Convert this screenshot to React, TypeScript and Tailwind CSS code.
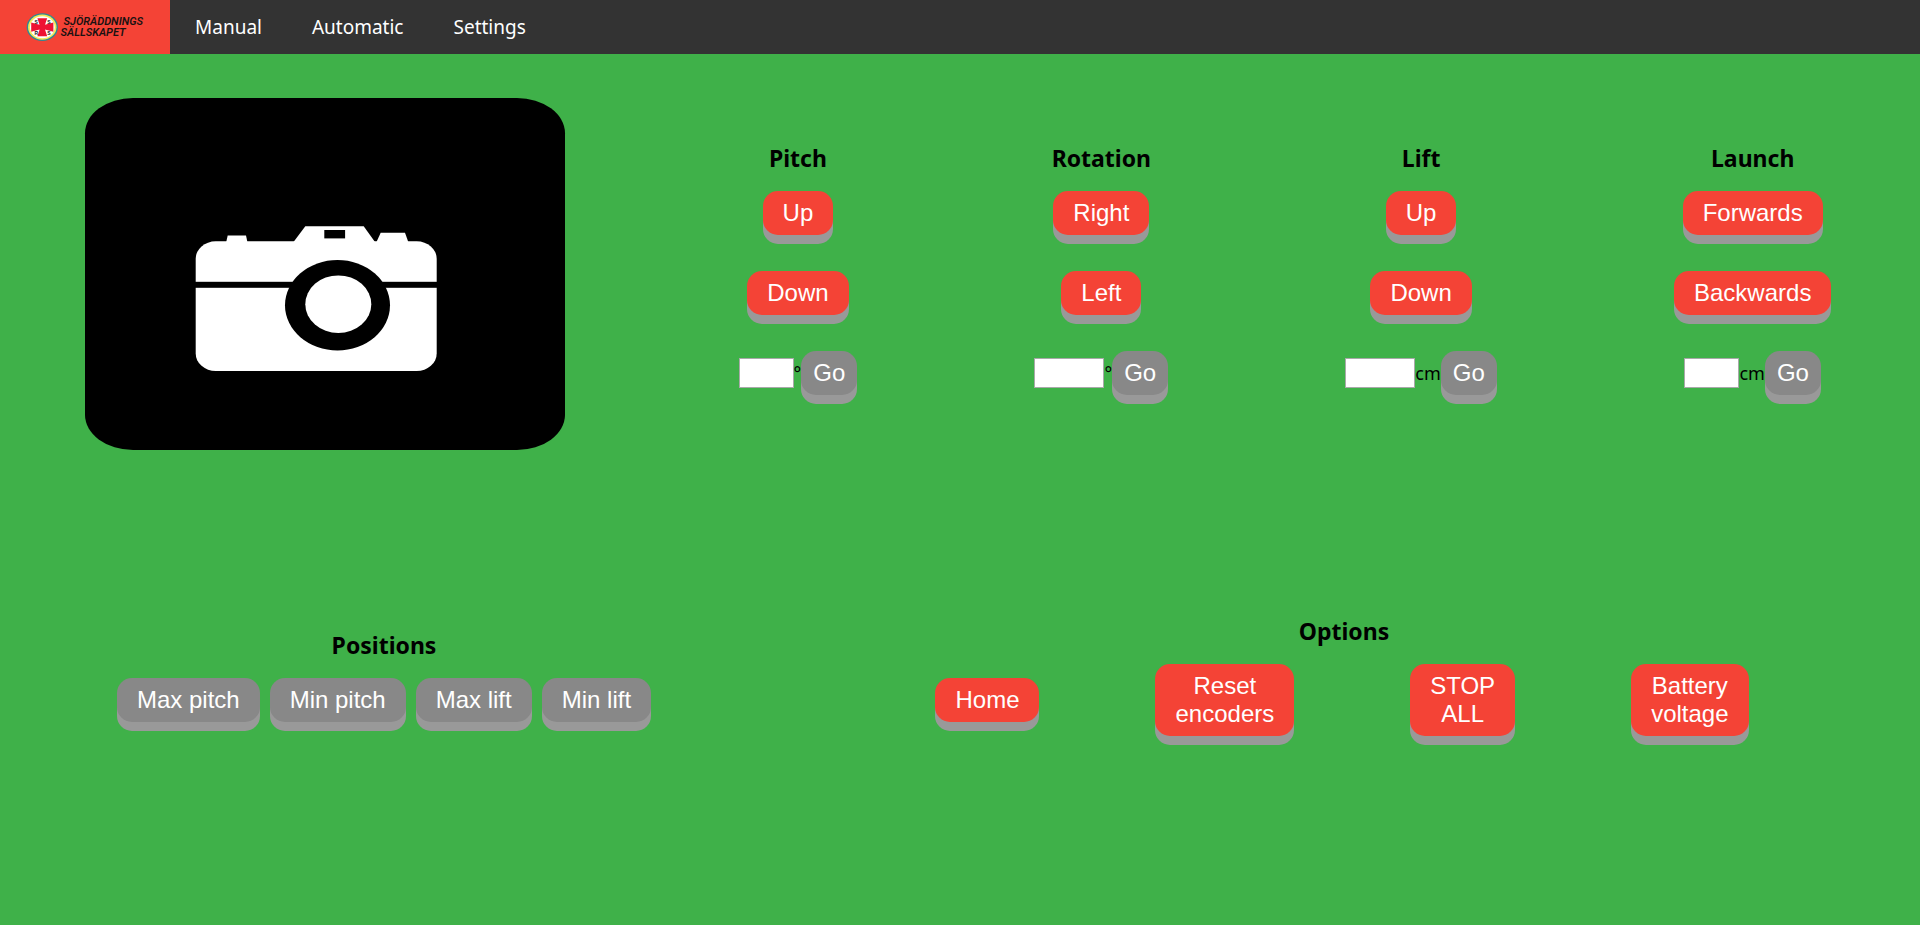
import type { ReactNode } from "react";

type ButtonProps = {
  children: ReactNode;
  tone?: "red" | "grey";
  compact?: boolean;
};

function PushButton({ children, tone = "red", compact = false }: ButtonProps) {
  const color = tone === "red" ? "bg-[#f44336]" : "bg-[#888888]";
  const padding = compact ? "px-3" : "px-5";
  return (
    <button
      type="button"
      className={`${color} ${padding} shrink-0 cursor-pointer rounded-[15px] py-2 text-center font-['Liberation_Sans',Arial,sans-serif] text-2xl leading-7 text-white shadow-[0_9px_#999999]`}
    >
      {children}
    </button>
  );
}

function Heading({ children }: { children: ReactNode }) {
  return <h2 className="text-[23px] leading-8 font-bold">{children}</h2>;
}

type Axis = {
  name: string;
  actions: string[];
  unit: string;
  field: string;
};

const axes: Axis[] = [
  { name: "Pitch", actions: ["Up", "Down"], unit: "°", field: "w-[55px]" },
  { name: "Rotation", actions: ["Right", "Left"], unit: "°", field: "w-[70px]" },
  { name: "Lift", actions: ["Up", "Down"], unit: "cm", field: "w-[70px]" },
  { name: "Launch", actions: ["Forwards", "Backwards"], unit: "cm", field: "w-[55px]" },
];

function AxisControl({ axis }: { axis: Axis }) {
  const id = `${axis.name.toLowerCase()}-value`;
  return (
    <section className="flex flex-col items-center gap-[17px]">
      <Heading>{axis.name}</Heading>
      <div className="flex flex-col items-center gap-9">
        {axis.actions.map((action) => (
          <PushButton key={action}>{action}</PushButton>
        ))}
        <form className="flex items-center" onSubmit={(e) => e.preventDefault()}>
          <input
            id={id}
            type="text"
            aria-label={`${axis.name} value`}
            className={`${axis.field} h-[30px] border border-[#a9a9a9] bg-white px-1 text-base`}
          />
          <label htmlFor={id} className="text-lg leading-7">
            {axis.unit}
          </label>
          <PushButton tone="grey" compact>
            Go
          </PushButton>
        </form>
      </div>
    </section>
  );
}

function Logo() {
  return (
    <svg viewBox="0 0 170 54" className="h-[54px] w-[170px]" role="img" aria-label="Sjöräddningssällskapet">
      <ellipse cx="42.3" cy="27.2" rx="15.6" ry="13.9" fill="#2f8a94" />
      <ellipse cx="42.3" cy="27.2" rx="14.2" ry="12.6" fill="#f3ea5a" />
      <ellipse cx="42.3" cy="27.2" rx="12.4" ry="11" fill="#ffffff" />
      <path
        d="M37.4 18.2H47.2L45 24.8L53.4 22.6V31.8L45 29.6L47.2 36.2H37.4L39.6 29.6L31.2 31.8V22.6L39.6 24.8Z"
        fill="#ee1133"
      />
      <g fontFamily="Liberation Sans, sans-serif" fontSize="5" fontWeight="700" fill="#1a1a1a">
        <text x="34.4" y="23.6">S</text>
        <text x="47.2" y="23.6">S</text>
        <text x="34.4" y="34.6">R</text>
        <text x="47.2" y="34.6">S</text>
      </g>
      <g fontFamily="Roboto, sans-serif" fontSize="11" fontWeight="600" fontStyle="italic" fill="#1a1212">
        <text x="63.5" y="25.4">SJÖRÄDDNINGS</text>
        <text x="60.5" y="36.4">SÄLLSKAPET</text>
      </g>
    </svg>
  );
}

function CameraFeed() {
  return (
    <svg viewBox="0 0 480 352" className="h-[352px] w-[480px] rounded-[10%] bg-black" role="img" aria-label="Camera">
      <g fill="#ffffff">
        <rect x="110.7" y="143.3" width="241" height="129.7" rx="20" ry="17.5" />
        <path d="M208.5 144L220.3 128.3H278.7L290 144Z" />
        <path d="M291.5 144L295.7 134.7H320L323.3 144Z" />
        <path d="M141.2 144L142.7 137.6H161L162.4 144Z" />
      </g>
      <rect x="239.3" y="132" width="20.8" height="8.4" />
      <rect x="108" y="183.8" width="246" height="6" />
      <ellipse cx="252.5" cy="207.2" rx="52.5" ry="45.2" />
      <ellipse cx="253.3" cy="206.2" rx="33" ry="28.8" fill="#ffffff" />
    </svg>
  );
}

export default function App() {
  return (
    <div className="min-h-screen bg-[#3fb149] font-['Noto_Sans','Open_Sans',sans-serif] text-black">
      <nav className="flex h-[54px] bg-[#333333] text-[19px] text-white">
        <a href="#home" className="bg-[#f44336]">
          <Logo />
        </a>
        {["Manual", "Automatic", "Settings"].map((item) => (
          <a key={item} href={`#${item.toLowerCase()}`} className="flex items-center px-[25px]">
            {item}
          </a>
        ))}
      </nav>

      <main>
        <div className="flex pt-11">
          <div className="flex w-[650px] shrink-0 justify-center">
            <CameraFeed />
          </div>
          <div className="flex flex-1 items-start justify-around pt-11">
            {axes.map((axis) => (
              <AxisControl key={axis.name} axis={axis} />
            ))}
          </div>
        </div>

        <div className="flex items-center pt-[165px] pb-12">
          <section className="flex w-2/5 flex-col items-center gap-[17px]">
            <Heading>Positions</Heading>
            <div className="flex gap-[10px]">
              {["Max pitch", "Min pitch", "Max lift", "Min lift"].map((position) => (
                <PushButton key={position} tone="grey">
                  {position}
                </PushButton>
              ))}
            </div>
          </section>
          <section className="flex w-3/5 flex-col items-center gap-[17px]">
            <Heading>Options</Heading>
            <div className="flex items-center gap-[116px] pr-1">
              <PushButton>Home</PushButton>
              <PushButton>
                Reset
                <br />
                encoders
              </PushButton>
              <PushButton>
                STOP
                <br />
                ALL
              </PushButton>
              <PushButton>
                Battery
                <br />
                voltage
              </PushButton>
            </div>
          </section>
        </div>
      </main>
    </div>
  );
}
